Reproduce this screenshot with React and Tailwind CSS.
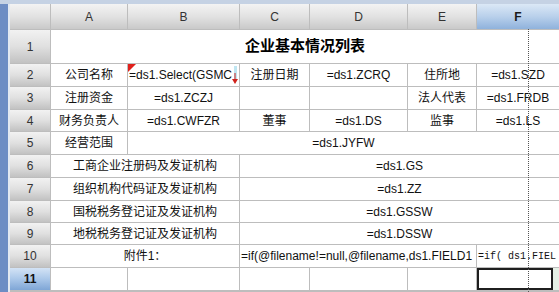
import React from 'react';

const font = "font-['Liberation_Sans','Noto_Sans_CJK_SC',sans-serif]";

function ColHead({ label, active }) {
  return (
    <div
      className={`flex items-center justify-center text-[12px] ${
        active
          ? 'bg-linear-to-b from-[#dbe8f6] via-[#b9d0eb] to-[#8fb2dc] font-bold text-[#1a1a1a]'
          : 'bg-linear-to-b from-[#f3f3f3] via-[#e2e2e2] to-[#c9c9c9] text-[#333]'
      }`}
    >
      {label}
    </div>
  );
}

function RowHead({ n, active }) {
  return (
    <div
      className={`flex items-center justify-center text-[12px] ${
        active
          ? 'bg-linear-to-b from-[#d3e3f5] via-[#aac7e9] to-[#7fa6d6] font-bold text-[#111]'
          : 'bg-linear-to-b from-[#f2f2f2] via-[#e0e0e0] to-[#c2c2c2] text-[#333]'
      }`}
    >
      {n}
    </div>
  );
}

function Cell({ children, span = '', align = 'center', className = '' }) {
  return (
    <div
      className={`bg-white flex items-center overflow-hidden whitespace-nowrap text-[12px] text-[#111] ${
        align === 'left' ? 'justify-start pl-[1px]' : 'justify-center'
      } ${span} ${className}`}
    >
      {children}
    </div>
  );
}

export default function App() {
  return (
    <div className={`w-[559px] h-[292px] overflow-hidden bg-[#dfe6ef] ${font}`}>
      <div className="h-[4px] bg-[#c5d2e4]" />
      <div className="flex relative">
        <div className="w-[8px] h-[288px] bg-[#6d8dc4]" />
        <div className="w-[2px] bg-[#e3e9f1]" />
        <div className="flex-1 grid grid-cols-[40px_76px_111px_69px_97px_68px_1fr] grid-rows-[25px_33px_22px_22px_21px_22px_22px_22px_21px_21px_22px_22px] gap-px bg-[#bdbdbd]">
          {/* header */}
          <ColHead label="" />
          <ColHead label="A" />
          <ColHead label="B" />
          <ColHead label="C" />
          <ColHead label="D" />
          <ColHead label="E" />
          <ColHead label="F" active />

          {/* row 1 */}
          <RowHead n="1" />
          <Cell span="col-span-6">
            <span className="text-[15px] font-bold text-black">企业基本情况列表</span>
          </Cell>

          {/* row 2 */}
          <RowHead n="2" />
          <Cell>公司名称</Cell>
          <Cell align="left" className="relative">
            <svg className="absolute left-0 top-0" width="8" height="8">
              <polygon points="0,0 8,0 0,8" fill="#e0201b" />
            </svg>
            <span>=ds1.Select(GSMC</span>
            <div className="absolute right-[2px] top-[2px] w-[3px] h-[14px] bg-[#bfe6f2]" />
            <svg className="absolute right-[1px] top-[9px]" width="6" height="11">
              <line x1="3" y1="0" x2="3" y2="9" stroke="#d0221c" strokeWidth="1" />
              <polygon points="0,6 6,6 3,11" fill="#d0221c" />
            </svg>
          </Cell>
          <Cell>注册日期</Cell>
          <Cell>=ds1.ZCRQ</Cell>
          <Cell>住所地</Cell>
          <Cell>=ds1.SZD</Cell>

          {/* row 3 */}
          <RowHead n="3" />
          <Cell>注册资金</Cell>
          <Cell>=ds1.ZCZJ</Cell>
          <Cell />
          <Cell />
          <Cell>法人代表</Cell>
          <Cell>=ds1.FRDB</Cell>

          {/* row 4 */}
          <RowHead n="4" />
          <Cell>财务负责人</Cell>
          <Cell>=ds1.CWFZR</Cell>
          <Cell>董事</Cell>
          <Cell>=ds1.DS</Cell>
          <Cell>监事</Cell>
          <Cell>=ds1.LS</Cell>

          {/* row 5 */}
          <RowHead n="5" />
          <Cell>经营范围</Cell>
          <Cell span="col-span-5">=ds1.JYFW</Cell>

          {/* rows 6-9 */}
          <RowHead n="6" />
          <Cell span="col-span-2">工商企业注册码及发证机构</Cell>
          <Cell span="col-span-4">=ds1.GS</Cell>

          <RowHead n="7" />
          <Cell span="col-span-2">组织机构代码证及发证机构</Cell>
          <Cell span="col-span-4">=ds1.ZZ</Cell>

          <RowHead n="8" />
          <Cell span="col-span-2">国税税务登记证及发证机构</Cell>
          <Cell span="col-span-4">=ds1.GSSW</Cell>

          <RowHead n="9" />
          <Cell span="col-span-2">地税税务登记证及发证机构</Cell>
          <Cell span="col-span-4">=ds1.DSSW</Cell>

          {/* row 10 */}
          <RowHead n="10" />
          <Cell span="col-span-2">附件1：</Cell>
          <Cell span="col-span-3" align="left">=if(@filename!=null,@filename,ds1.FIELD1</Cell>
          <Cell align="left" className="font-['Liberation_Mono',monospace] !text-[10px]">
            =if( ds1.FIEL
          </Cell>

          {/* row 11 */}
          <RowHead n="11" active />
          <Cell />
          <Cell />
          <Cell />
          <Cell />
          <Cell />
          <div className="bg-[#e6f0e6] flex items-stretch">
            <div className="w-[76px] bg-white border-2 border-[#1f1f1f]" />
          </div>
        </div>
        {/* page break marker */}
        <div className="absolute left-[528px] top-[25px] bottom-0 border-l border-dotted border-[#555]" />
      </div>
    </div>
  );
}
